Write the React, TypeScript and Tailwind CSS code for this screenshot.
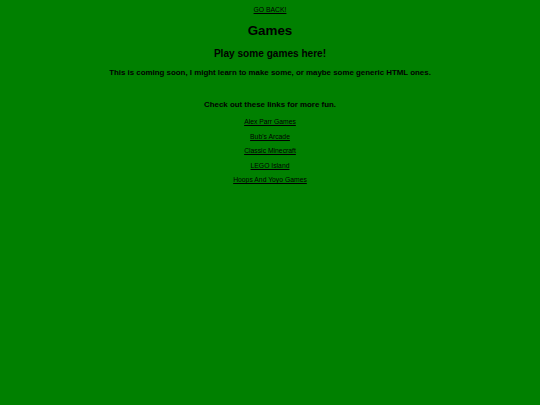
import React from 'react';

const links = ['Alex Parr Games', "Bub's Arcade", 'Classic Minecraft', 'LEGO Island', 'Hoops And Yoyo Games'];

export default function App() {
  return (
    <div className="min-h-[405px] w-full bg-[#008000] text-black font-['Liberation_Sans',Arial,sans-serif] flex flex-col items-center text-center pt-[6px]">
      <a href="#" className="underline text-[6.8px] leading-[8px]">GO BACK!</a>
      <h1 className="mt-[9px] text-[13.4px] leading-[16px] font-bold">Games</h1>
      <h2 className="mt-[9px] text-[10.1px] leading-[12px] font-bold">Play some games here!</h2>
      <h3 className="mt-[8px] text-[7.9px] leading-[10px] font-bold">This is coming soon, I might learn to make some, or maybe some generic HTML ones.</h3>
      <h3 className="mt-[22px] text-[7.9px] leading-[10px] font-bold">Check out these links for more fun.</h3>
      <ul className="mt-[8px] flex flex-col items-center gap-[6.5px]">
        {links.map(l => (
          <li key={l}>
            <a href="#" className="underline text-[6.8px] leading-[8px] block">{l}</a>
          </li>
        ))}
      </ul>
    </div>
  );
}
